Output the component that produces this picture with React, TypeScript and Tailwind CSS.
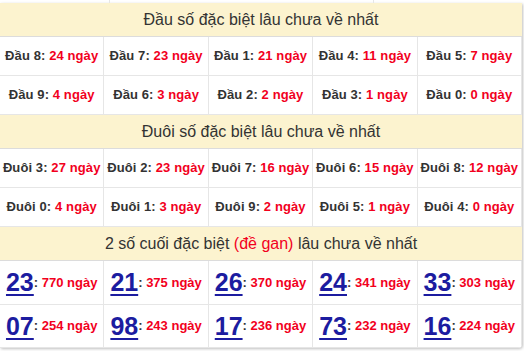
const dau1 = [
  ['Đầu 8:', '24'],
  ['Đầu 7:', '23'],
  ['Đầu 1:', '21'],
  ['Đầu 4:', '11'],
  ['Đầu 5:', '7'],
];
const dau2 = [
  ['Đầu 9:', '4'],
  ['Đầu 6:', '3'],
  ['Đầu 2:', '2'],
  ['Đầu 3:', '1'],
  ['Đầu 0:', '0'],
];
const duoi1 = [
  ['Đuôi 3:', '27'],
  ['Đuôi 2:', '23'],
  ['Đuôi 7:', '16'],
  ['Đuôi 6:', '15'],
  ['Đuôi 8:', '12'],
];
const duoi2 = [
  ['Đuôi 0:', '4'],
  ['Đuôi 1:', '3'],
  ['Đuôi 9:', '2'],
  ['Đuôi 5:', '1'],
  ['Đuôi 4:', '0'],
];
const gan1 = [
  ['23', '770'],
  ['21', '375'],
  ['26', '370'],
  ['24', '341'],
  ['33', '303'],
];
const gan2 = [
  ['07', '254'],
  ['98', '243'],
  ['17', '236'],
  ['73', '232'],
  ['16', '224'],
];

function Header({ children }: { children: React.ReactNode }) {
  return (
    <div className="flex h-[34px] items-center justify-center border-b border-[#dcdcdc] bg-[#fcf3cf] text-[16px] text-[#333]">
      {children}
    </div>
  );
}

function CountRow({ items }: { items: string[][] }) {
  return (
    <div className="grid h-[39px] grid-cols-5 border-b border-[#e6e6e6]">
      {items.map(([label, n]) => (
        <div key={label} className="flex items-center justify-center whitespace-nowrap border-r border-[#e6e6e6] text-[13px] font-bold tracking-[0.1px] text-[#333]">
          {label}&nbsp;<span className="text-[#f2001d]">{n} ngày</span>
        </div>
      ))}
    </div>
  );
}

function GanRow({ items, h }: { items: string[][]; h: string }) {
  return (
    <div className={`grid grid-cols-5 border-b border-[#e6e6e6] ${h}`}>
      {items.map(([num, n]) => (
        <div key={num} className="flex items-center justify-center whitespace-nowrap border-r border-[#e6e6e6] text-[#333]">
          <span className="text-[25px] font-bold leading-none text-[#1c1ca0] underline decoration-2 underline-offset-[3px]">{num}</span>
          <span className="text-[13px] font-bold">:&nbsp;</span>
          <span className="text-[13px] font-bold text-[#f2001d]">{n} ngày</span>
        </div>
      ))}
    </div>
  );
}

export default function App() {
  return (
    <div className="h-[351px] w-[524px] overflow-hidden bg-white font-['Liberation_Sans',Arial,sans-serif]">
      <div className="flex h-[3px]">
        <div className="w-[110px] border-r border-[#e6e6e6]" />
        <div className="w-[264px] border-r border-[#e6e6e6]" />
      </div>
      <div className="w-[522px] overflow-hidden rounded-br-[4px] shadow-[1px_1px_3px_rgba(0,0,0,0.25)]">
        <Header>Đầu số đặc biệt lâu chưa về nhất</Header>
        <CountRow items={dau1} />
        <CountRow items={dau2} />
        <Header>Đuôi số đặc biệt lâu chưa về nhất</Header>
        <CountRow items={duoi1} />
        <CountRow items={duoi2} />
        <Header>
          2 số cuối đặc biệt&nbsp;<span className="text-[#f2001d]">(đề gan)</span>&nbsp;lâu chưa về nhất
        </Header>
        <GanRow items={gan1} h="h-[44px]" />
        <GanRow items={gan2} h="h-[43px]" />
      </div>
    </div>
  );
}
